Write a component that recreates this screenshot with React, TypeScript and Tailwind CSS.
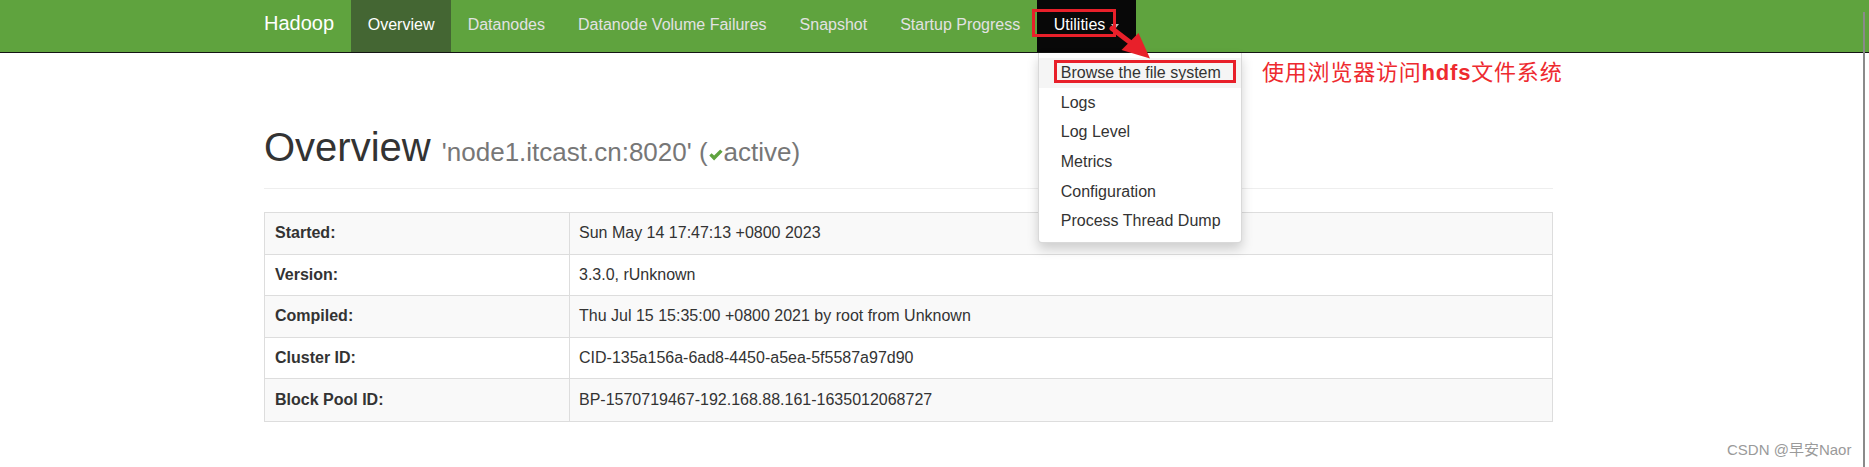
import React from "react";

const rows: [string, string][] = [
  ["Started:", "Sun May 14 17:47:13 +0800 2023"],
  ["Version:", "3.3.0, rUnknown"],
  ["Compiled:", "Thu Jul 15 15:35:00 +0800 2021 by root from Unknown"],
  ["Cluster ID:", "CID-135a156a-6ad8-4450-a5ea-5f5587a97d90"],
  ["Block Pool ID:", "BP-1570719467-192.168.88.161-1635012068727"],
];

const navItems = ["Datanodes", "Datanode Volume Failures", "Snapshot", "Startup Progress"];

const menuItems = ["Browse the file system", "Logs", "Log Level", "Metrics", "Configuration", "Process Thread Dump"];

export default function App() {
  return (
    <div className="relative h-[467px] w-[1869px] overflow-hidden bg-white font-['Liberation_Sans','Noto_Sans_CJK_SC',sans-serif] text-[#333]">
      {/* Navbar */}
      <nav className="h-[53px] border-b border-[#141414] bg-[#5fa33e]">
        <div className="ml-[247px] flex h-[52px]">
          <div className="px-[17px] pt-[12px] text-[20px] leading-[22px] text-white">Hadoop</div>
          <div className="bg-[#446633] px-[16.7px] pt-[13px] text-[16px] leading-[23px] text-white">Overview</div>
          {navItems.map((n) => (
            <div key={n} className="px-[16.5px] pt-[13px] text-[16px] leading-[23px] text-[#e2e2e2]">
              {n}
            </div>
          ))}
          <div className="relative bg-[#080808] px-[17px] pt-[13px] text-[16px] leading-[23px] text-white">
            <span className="inline-flex items-center">
              Utilities
              <span className="ml-[6px] mt-[3px] inline-block h-0 w-0 border-x-[4px] border-t-[5px] border-x-transparent border-t-[#bbbbbb]" />
            </span>
            <div className="absolute left-[1px] top-[53px] z-10 w-[204px] rounded-b-[4px] border border-t-0 border-[rgba(0,0,0,0.15)] bg-white pb-[6px] pt-[5px] text-[16px] leading-[22px] text-[#333] shadow-[0_6px_12px_rgba(0,0,0,0.175)]">
              {menuItems.map((m, i) => (
                <div
                  key={m}
                  className={
                    i === 0
                      ? "flex h-[30px] items-center whitespace-nowrap bg-[#f5f5f5] pl-[22px]"
                      : "flex h-[29.6px] items-center whitespace-nowrap pl-[22px]"
                  }
                >
                  {m}
                </div>
              ))}
            </div>
          </div>
        </div>
      </nav>

      {/* Content */}
      <div className="ml-[264px] w-[1289px]">
        <div className="mt-[72px] border-b border-[#eeeeee] pb-[19px]">
          <h1 className="h-[44px] whitespace-nowrap text-[40px] font-normal leading-[44px] text-[#333]">
            Overview{" "}
            <span className="text-[26px] leading-[1] text-[#777]">
              'node1.itcast.cn:8020' (
              <svg className="mx-[1px] inline-block align-baseline" width="14" height="12" viewBox="0 0 14 12">
                <path d="M0.3 6.4 L2.6 4.2 L5.1 6.6 L11.2 0.4 L13.6 2.7 L5.1 11.4 Z" fill="#5fa33e" />
              </svg>
              active)
            </span>
          </h1>
        </div>

        <div className="mt-[23px] border border-[#dddddd] text-[16px]">
          {rows.map(([k, v], i) => (
            <div
              key={k}
              className={
                (i % 2 === 0 ? "bg-[#f9f9f9] " : "bg-white ") +
                (i < rows.length - 1 ? "border-b border-[#dddddd] " : "") +
                "grid h-[41.6px] grid-cols-[305px_1fr]"
              }
            >
              <div className="flex items-center border-r border-[#dddddd] px-[10px] font-bold">{k}</div>
              <div className="flex items-center px-[9px]">{v}</div>
            </div>
          ))}
        </div>
      </div>

      {/* Annotation overlays */}
      <div className="absolute left-[1032px] top-[9px] h-[28px] w-[84px] border-[3px] border-[#e8202a]" />
      <div className="absolute left-[1054px] top-[60px] z-20 h-[23px] w-[182px] border-[3px] border-[#e8202a]" />
      <svg className="absolute left-[1100px] top-[20px] z-20" width="60" height="45" viewBox="0 0 60 45">
        <line x1="12" y1="8.5" x2="31" y2="23" stroke="#e8202a" strokeWidth="5" strokeLinecap="round" />
        <polygon points="50,38.5 21.5,30 38.5,13" fill="#e8202a" />
      </svg>
      <div className="absolute left-[1262px] top-[62px] whitespace-nowrap text-[22px] leading-[22px] tracking-[0.8px] text-[#ee2a2f]">
        使用浏览器访问<span className="font-bold">hdfs</span>文件系统
      </div>

      {/* right edge line */}
      <div className="absolute bottom-0 left-[1863px] top-[12px] w-[2px] bg-[#8a8a8a]" />

      {/* watermark */}
      <div className="absolute left-[1727px] top-[441px] whitespace-nowrap text-[15px] leading-[18px] text-[#9a9a9a]">
        CSDN @早安Naor
      </div>
    </div>
  );
}
